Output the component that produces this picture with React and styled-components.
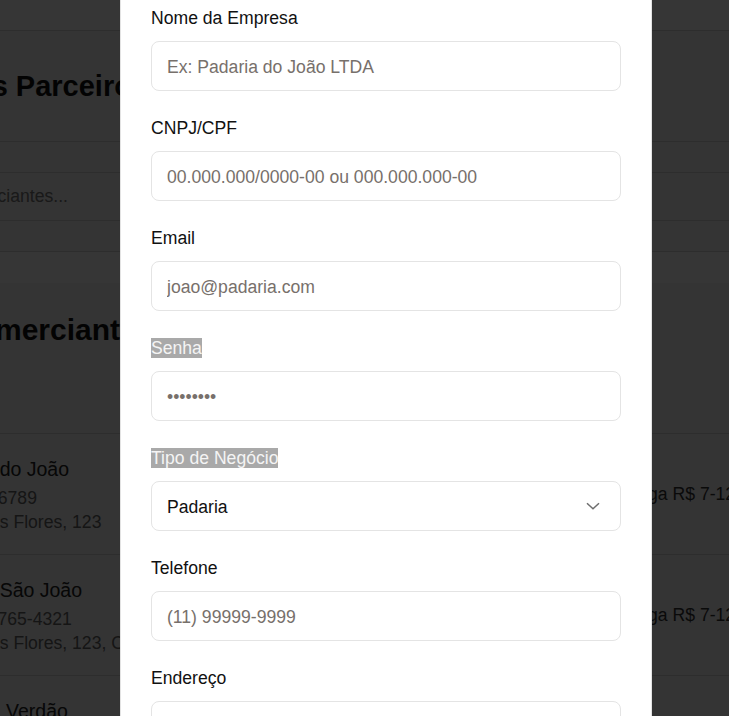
import React from 'react';
import styled, { createGlobalStyle } from 'styled-components';
import { Phone, MapPin } from 'lucide-react';

const GlobalStyle = createGlobalStyle`
  html, body {
    margin: 0;
    padding: 0;
  }
  body {
    width: 729px;
    height: 716px;
    overflow: hidden;
    font-family: 'Liberation Sans', Arial, sans-serif;
    background: #f3f3f3;
  }
  * {
    box-sizing: border-box;
  }
`;

/* page behind the dialog */
const StyledPage = styled.div`
  width: 729px;
  height: 716px;
  overflow: hidden;
  background: #f3f3f3;
  color: #222;
  white-space: nowrap;
`;
const TopBar = styled.div`
  height: 31px;
  background: #fff;
  border-bottom: 1px solid #d4d4d4;
`;
const TitleBlock = styled.div`
  height: 110px;
  display: flex;
  align-items: center;
  h1 {
    margin: 0 0 0 -184px;
    font-size: 29px;
    line-height: 34px;
    font-weight: 700;
    color: #111;
  }
`;
const Band = styled.div`
  height: ${(p) => p.$h}px;
  border-top: 1px solid #d4d4d4;
  background: ${(p) => (p.$light ? '#fff' : 'transparent')};
  display: flex;
  align-items: center;
  &:last-child {
    border-bottom: 1px solid #d4d4d4;
  }
`;
const SearchText = styled.span`
  margin-left: -111px;
  font-size: 17.6px;
  color: #777;
`;
const SectionHead = styled.div`
  height: 150px;
  padding-top: 30px;
  h2 {
    margin: 0 0 0 -45px;
    font-size: 30px;
    line-height: 34px;
    font-weight: 700;
    color: #111;
  }
`;
const MerchantRow = styled.div`
  border-top: 1px solid #d4d4d4;
  padding: 20px 0;
  margin-left: -73px;
  display: grid;
  grid-template-columns: 679px auto;
  align-items: center;
  .name {
    font-size: 19.5px;
    line-height: 30px;
    margin-bottom: 2px;
    color: #222;
  }
  .line {
    display: flex;
    align-items: center;
    gap: 2px;
    font-size: 17.6px;
    line-height: 24px;
    color: #666;
  }
  .fee {
    font-size: 17.6px;
    color: #333;
  }
`;

/* dialog */
const Overlay = styled.div`
  position: fixed;
  inset: 0;
  background: rgba(0, 0, 0, 0.79);
  padding-left: 120px;
  overflow: hidden;
`;
const Modal = styled.div`
  width: 532px;
  background: #fff;
  border-left: 1px solid #e3e3e3;
  border-right: 1px solid #e3e3e3;
  padding: 8px 30px 30px;
`;
const Field = styled.div`
  margin-bottom: 27px;
  label {
    display: block;
    font-size: 17.6px;
    line-height: 20px;
    margin-bottom: 13px;
    color: #111;
  }
`;
const Selected = styled.span`
  background: #a9a9a9;
  color: #f4f4f4;
`;
const Input = styled.input`
  display: block;
  width: 100%;
  height: 50px;
  border: 1px solid #e4e4e4;
  border-radius: 8px;
  padding: 2px 15px 0;
  font: inherit;
  font-size: 17.6px;
  color: #111;
  background: #fff;
  outline: none;
  &::placeholder {
    color: #77706b;
  }
`;
const SelectWrap = styled.div`
  position: relative;
  svg {
    position: absolute;
    right: 21px;
    top: 50%;
    transform: translateY(-50%);
    pointer-events: none;
  }
`;
const Select = styled.select`
  display: block;
  width: 100%;
  height: 50px;
  border: 1px solid #e4e4e4;
  border-radius: 8px;
  padding: 2px 15px 0;
  font: inherit;
  font-size: 17.6px;
  color: #111;
  background: #fff;
  appearance: none;
  outline: none;
`;
const SubmitButton = styled.button`
  width: 100%;
  height: 50px;
  border: none;
  border-radius: 8px;
  background: #111;
  color: #fff;
  font: inherit;
  font-size: 17.6px;
`;

const merchants = [
  { name: 'Padaria do João', phone: '12345-6789', address: 'Rua das Flores, 123' },
  { name: 'Padaria São João', phone: '(11) 98765-4321', address: 'Rua das Flores, 123, Centro' },
  { name: 'Hortifruti Verdão', phone: '(11) 91234-5678', address: 'Av. Brasil, 456' },
];

const fields = [
  { label: 'Nome da Empresa', placeholder: 'Ex: Padaria do João LTDA' },
  { label: 'CNPJ/CPF', placeholder: '00.000.000/0000-00 ou 000.000.000-00' },
  { label: 'Email', placeholder: 'joao@padaria.com', type: 'email' },
  { label: 'Senha', placeholder: '••••••••', type: 'password', selected: true },
];

const Chevron = () => (
  <svg width="14" height="8" viewBox="0 0 14 8" fill="none">
    <path d="M1 1.2 7 6.8 13 1.2" stroke="#6e6e6e" strokeWidth="1.5" />
  </svg>
);

const BackgroundPage = () => (
  <StyledPage>
    <TopBar />
    <TitleBlock>
      <h1>Comerciantes Parceiros</h1>
    </TitleBlock>
    <Band $h={31} />
    <Band $h={48}>
      <SearchText>Buscar comerciantes...</SearchText>
    </Band>
    <Band $h={31} />
    <Band $h={32} $light />
    <SectionHead>
      <h2>Comerciantes</h2>
    </SectionHead>
    {merchants.map((m) => (
      <MerchantRow key={m.name}>
        <div>
          <div className="name">{m.name}</div>
          <div className="line">
            <Phone size={14} />
            {m.phone}
          </div>
          <div className="line">
            <MapPin size={14} />
            {m.address}
          </div>
        </div>
        <span className="fee">Entrega R$ 7-12</span>
      </MerchantRow>
    ))}
  </StyledPage>
);

const App = () => {
  return (
    <>
      <GlobalStyle />
      <BackgroundPage />
      <Overlay>
        <Modal>
          {fields.map((f) => (
            <Field key={f.label}>
              <label>{f.selected ? <Selected>{f.label}</Selected> : f.label}</label>
              <Input type={f.type || 'text'} placeholder={f.placeholder} />
            </Field>
          ))}
          <Field>
            <label>
              <Selected>Tipo de Negócio</Selected>
            </label>
            <SelectWrap>
              <Select defaultValue="padaria">
                <option value="padaria">Padaria</option>
                <option value="mercado">Mercado</option>
                <option value="hortifruti">Hortifruti</option>
                <option value="acougue">Açougue</option>
              </Select>
              <Chevron />
            </SelectWrap>
          </Field>
          <Field>
            <label>Telefone</label>
            <Input placeholder="(11) 99999-9999" />
          </Field>
          <Field>
            <label>Endereço</label>
            <Input placeholder="Rua, número, bairro" />
          </Field>
          <SubmitButton>Cadastrar</SubmitButton>
        </Modal>
      </Overlay>
    </>
  );
};

export default App;
